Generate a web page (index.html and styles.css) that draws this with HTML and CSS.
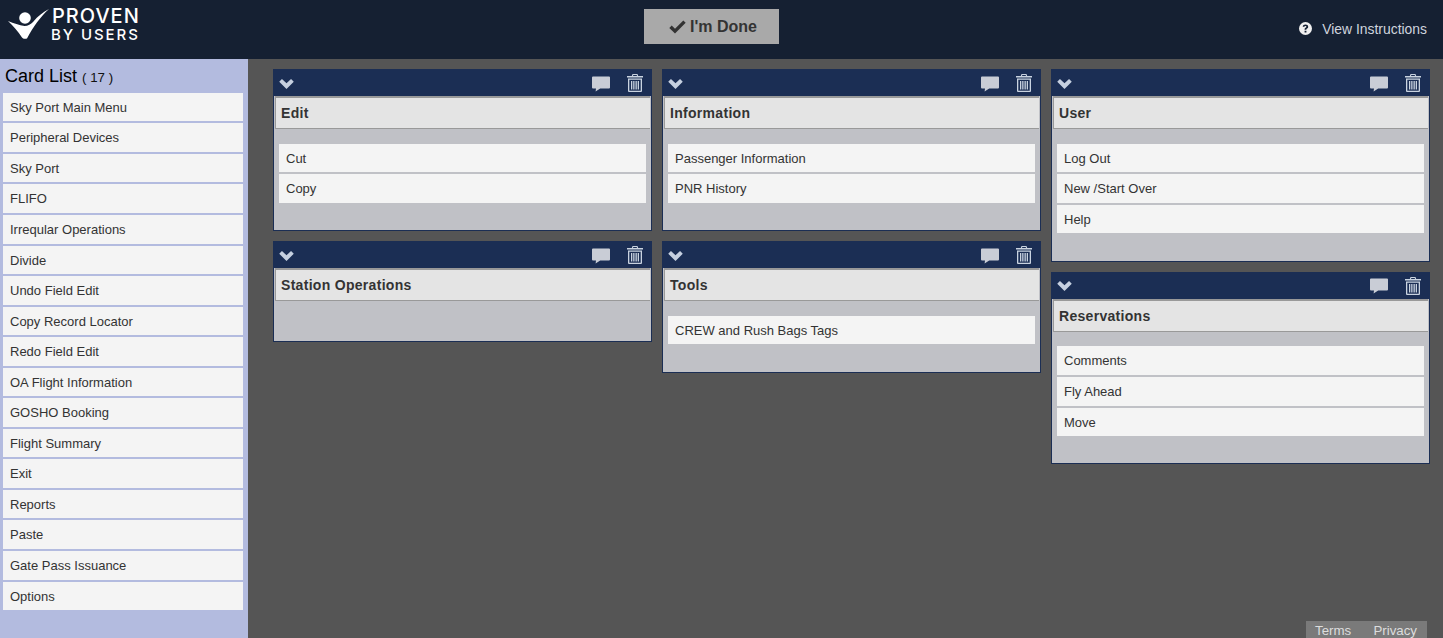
FILE: index.html
```html
<!DOCTYPE html>
<html lang="en">
<head>
<meta charset="utf-8">
<title>Card Sort</title>
<link rel="stylesheet" href="styles.css">
</head>
<body>
<svg class="defs" width="0" height="0" aria-hidden="true">
  <symbol id="chev" viewBox="0 0 16 11"><path d="M3 0 8 4.800 13 0 16 3 8 11 0 3Z"/></symbol>
  <symbol id="bubble" viewBox="0 0 18 16"><path d="M1 0.500H17a1 1 0 0 1 1 1V11.500a1 1 0 0 1-1 1H8.200L3.600 15.600 4 12.500H1a1 1 0 0 1-1-1V1.500a1 1 0 0 1 1-1Z"/></symbol>
  <symbol id="trash" viewBox="0 0 16 18"><path fill-rule="evenodd" d="M5.500 0H10.500L11.200 2H16V3.500H0V2H4.800ZM6.300 1 6 2H10L9.700 1ZM1 4.500H15V17a1 1 0 0 1-1 1H2a1 1 0 0 1-1-1ZM2.300 5.800V16.700H13.700V5.800ZM4 7H5.300V15.500H4ZM6.200 7H7.500V15.500H6.200ZM8.500 7H9.800V15.500H8.500ZM10.700 7H12V15.500H10.700Z"/></symbol>
</svg>
<header class="topbar">
  <div class="logo">
    <svg class="logo-mark" viewBox="0 0 42 32"><circle cx="17" cy="9" r="5.800"/><path d="M0 12C6 14.500 11 16 16.500 17 20 17 23 15 25 13 30 7 35 3 41 0 33 7 25 18 19 29.500 17 30 15 30 14 28.500 10 22 5 17 0 12Z"/></svg>
    <div class="logo-text"><span class="logo-top">PROVEN</span><span class="logo-bottom">BY USERS</span></div>
  </div>
  <button class="done" type="button">
    <svg class="done-check" viewBox="0 0 17 14"><path d="M6 13.600 0.300 7.900 2.700 5.500 6 8.800 14.300 0.400 16.700 2.800Z"/></svg>
    I'm Done
  </button>
  <a class="help" href="#">
    <svg class="help-icon" viewBox="0 0 14 14"><path fill-rule="evenodd" d="M7 0a7 7 0 1 1 0 14A7 7 0 0 1 7 0ZM7 2.600C5.300 2.600 4.300 3.500 3.900 4.800L5.500 5.400C5.700 4.700 6.200 4.300 6.900 4.300 7.500 4.300 8 4.600 8 5.100 8 5.600 7.500 5.900 7 6.300 6.300 6.800 6 7.300 6 8.300H7.900C7.900 7.700 8.200 7.500 8.700 7.100 9.400 6.600 9.900 6 9.900 5 9.900 3.500 8.600 2.600 7 2.600ZM6 9.300V11.200H8V9.300Z"/></svg>
    View Instructions
  </a>
</header>
<div class="layout">
  <aside class="sidebar">
    <h1 class="list-title">Card List <span class="list-count">( 17 )</span></h1>
    <ul class="list">
      <li class="item">Sky Port Main Menu</li>
      <li class="item">Peripheral Devices</li>
      <li class="item">Sky Port</li>
      <li class="item">FLIFO</li>
      <li class="item">Irreqular Operations</li>
      <li class="item">Divide</li>
      <li class="item">Undo Field Edit</li>
      <li class="item">Copy Record Locator</li>
      <li class="item">Redo Field Edit</li>
      <li class="item">OA Flight Information</li>
      <li class="item">GOSHO Booking</li>
      <li class="item">Flight Summary</li>
      <li class="item">Exit</li>
      <li class="item">Reports</li>
      <li class="item">Paste</li>
      <li class="item">Gate Pass Issuance</li>
      <li class="item">Options</li>
    </ul>
  </aside>
  <main class="board">
    <div class="column">
      <section class="card">
        <div class="card-head"><svg class="ic-chev"><use href="#chev"/></svg><svg class="ic-bubble"><use href="#bubble"/></svg><svg class="ic-trash"><use href="#trash"/></svg></div>
        <h2 class="card-title">Edit</h2>
        <ul class="card-list">
          <li class="card-item">Cut</li>
          <li class="card-item">Copy</li>
        </ul>
      </section>
      <section class="card">
        <div class="card-head"><svg class="ic-chev"><use href="#chev"/></svg><svg class="ic-bubble"><use href="#bubble"/></svg><svg class="ic-trash"><use href="#trash"/></svg></div>
        <h2 class="card-title">Station Operations</h2>
        <ul class="card-list"></ul>
      </section>
    </div>
    <div class="column">
      <section class="card">
        <div class="card-head"><svg class="ic-chev"><use href="#chev"/></svg><svg class="ic-bubble"><use href="#bubble"/></svg><svg class="ic-trash"><use href="#trash"/></svg></div>
        <h2 class="card-title">Information</h2>
        <ul class="card-list">
          <li class="card-item">Passenger Information</li>
          <li class="card-item">PNR History</li>
        </ul>
      </section>
      <section class="card">
        <div class="card-head"><svg class="ic-chev"><use href="#chev"/></svg><svg class="ic-bubble"><use href="#bubble"/></svg><svg class="ic-trash"><use href="#trash"/></svg></div>
        <h2 class="card-title">Tools</h2>
        <ul class="card-list">
          <li class="card-item">CREW and Rush Bags Tags</li>
        </ul>
      </section>
    </div>
    <div class="column">
      <section class="card">
        <div class="card-head"><svg class="ic-chev"><use href="#chev"/></svg><svg class="ic-bubble"><use href="#bubble"/></svg><svg class="ic-trash"><use href="#trash"/></svg></div>
        <h2 class="card-title">User</h2>
        <ul class="card-list">
          <li class="card-item">Log Out</li>
          <li class="card-item">New /Start Over</li>
          <li class="card-item">Help</li>
        </ul>
      </section>
      <section class="card">
        <div class="card-head"><svg class="ic-chev"><use href="#chev"/></svg><svg class="ic-bubble"><use href="#bubble"/></svg><svg class="ic-trash"><use href="#trash"/></svg></div>
        <h2 class="card-title">Reservations</h2>
        <ul class="card-list">
          <li class="card-item">Comments</li>
          <li class="card-item">Fly Ahead</li>
          <li class="card-item">Move</li>
        </ul>
      </section>
    </div>
  </main>
</div>
<footer class="legal"><a class="legal-link" href="#">Terms</a><a class="legal-link" href="#">Privacy</a></footer>
</body>
</html>
```
FILE: styles.css
```css
* { box-sizing: border-box; }
html, body { margin: 0; padding: 0; height: 638px; overflow: hidden; }
body { font-family: "Liberation Sans", Arial, sans-serif; font-size: 13px; color: #333; background: #555; }
.defs { position: absolute; }
ul { list-style: none; margin: 0; padding: 0; }

.topbar { height: 59px; background: #152032; display: grid; grid-template-columns: 644px 135px 1fr; align-items: start; }
.logo { display: flex; align-items: flex-start; padding: 9px 0 0 8px; }
.logo-mark { width: 42px; height: 32px; fill: #fff; flex: none; }
.logo-text { display: flex; flex-direction: column; margin: -3px 0 0 1px; color: #fff; font-family: Inter, sans-serif; }
.logo-top { font-size: 20px; line-height: 21px; font-weight: 500; letter-spacing: 1px; margin-left: 1px; }
.logo-bottom { font-size: 15px; line-height: 15px; font-weight: 500; letter-spacing: 1.9px; }

.done { margin-top: 9px; height: 35px; width: 135px; border: 0; padding: 0 0 0 3px; background: #a9a9a9; color: #333; font: bold 16px "Liberation Sans", Arial, sans-serif; display: flex; align-items: center; justify-content: center; gap: 4px; }
.done-check { width: 17px; height: 14px; fill: #333; }

.help { justify-self: end; margin: 21px 16px 0 0; display: flex; align-items: center; color: #cfd4de; text-decoration: none; font-size: 13.9px; line-height: 16px; gap: 10px; }
.help-icon { width: 13px; height: 13px; fill: #f0f0f0; margin-top: -2px; }

.layout { display: flex; height: 579px; }
.sidebar { width: 248px; flex: none; background: #b3bbdf; padding: 0 5px 0 3px; }
.list-title { margin: 0; padding: 7px 0 0 2px; height: 33.8px; font-size: 18px; line-height: 21px; font-weight: normal; color: #000; }
.list-count { font-size: 13.3px; color: #111; }
.item { height: 28.56px; margin-bottom: 2px; background: #f4f4f4; padding-left: 7px; line-height: 29px; }

.board { flex: 1; display: flex; gap: 10px; padding: 10px 0 0 25px; align-items: flex-start; }
.column { width: 379px; display: flex; flex-direction: column; gap: 10px; }
.card { border: 1px solid #1b2e54; border-top: 0; background: #c0c1c6; }
.card-head { height: 27px; margin: 0 -1px; background: #1b2e54; display: flex; align-items: center; padding: 0 9px 0 6px; }
.ic-chev { width: 15px; height: 10px; fill: #c6d0e0; margin-top: 2px; }
.ic-bubble { width: 18px; height: 16px; fill: #c9cdd6; margin: 2px 0 0 auto; }
.ic-trash { width: 16px; height: 18px; fill: #c9d3e0; margin: 1px 0 0 17px; }
.card-title { margin: 0 1px 0 1px; height: 33px; background: #e4e4e4; border-top: 2px solid #999; border-left: 1px solid #999; border-bottom: 1px solid #999; font-size: 14px; font-weight: bold; line-height: 30px; padding-left: 5px; letter-spacing: 0.3px; color: #333; }
.card-list { padding: 14.8px 5px 25.2px 5px; }
.card-item { height: 28.56px; margin-bottom: 2px; background: #f4f4f4; padding-left: 7px; line-height: 29px; }

.legal { position: absolute; right: 16px; bottom: 0; width: 121px; height: 17px; background: #7a7a7a; display: flex; justify-content: space-between; padding: 1px 10px 0 9px; line-height: 17px; overflow: hidden; }
.legal-link { color: #ddd; text-decoration: none; font-size: 13.3px; }
```
